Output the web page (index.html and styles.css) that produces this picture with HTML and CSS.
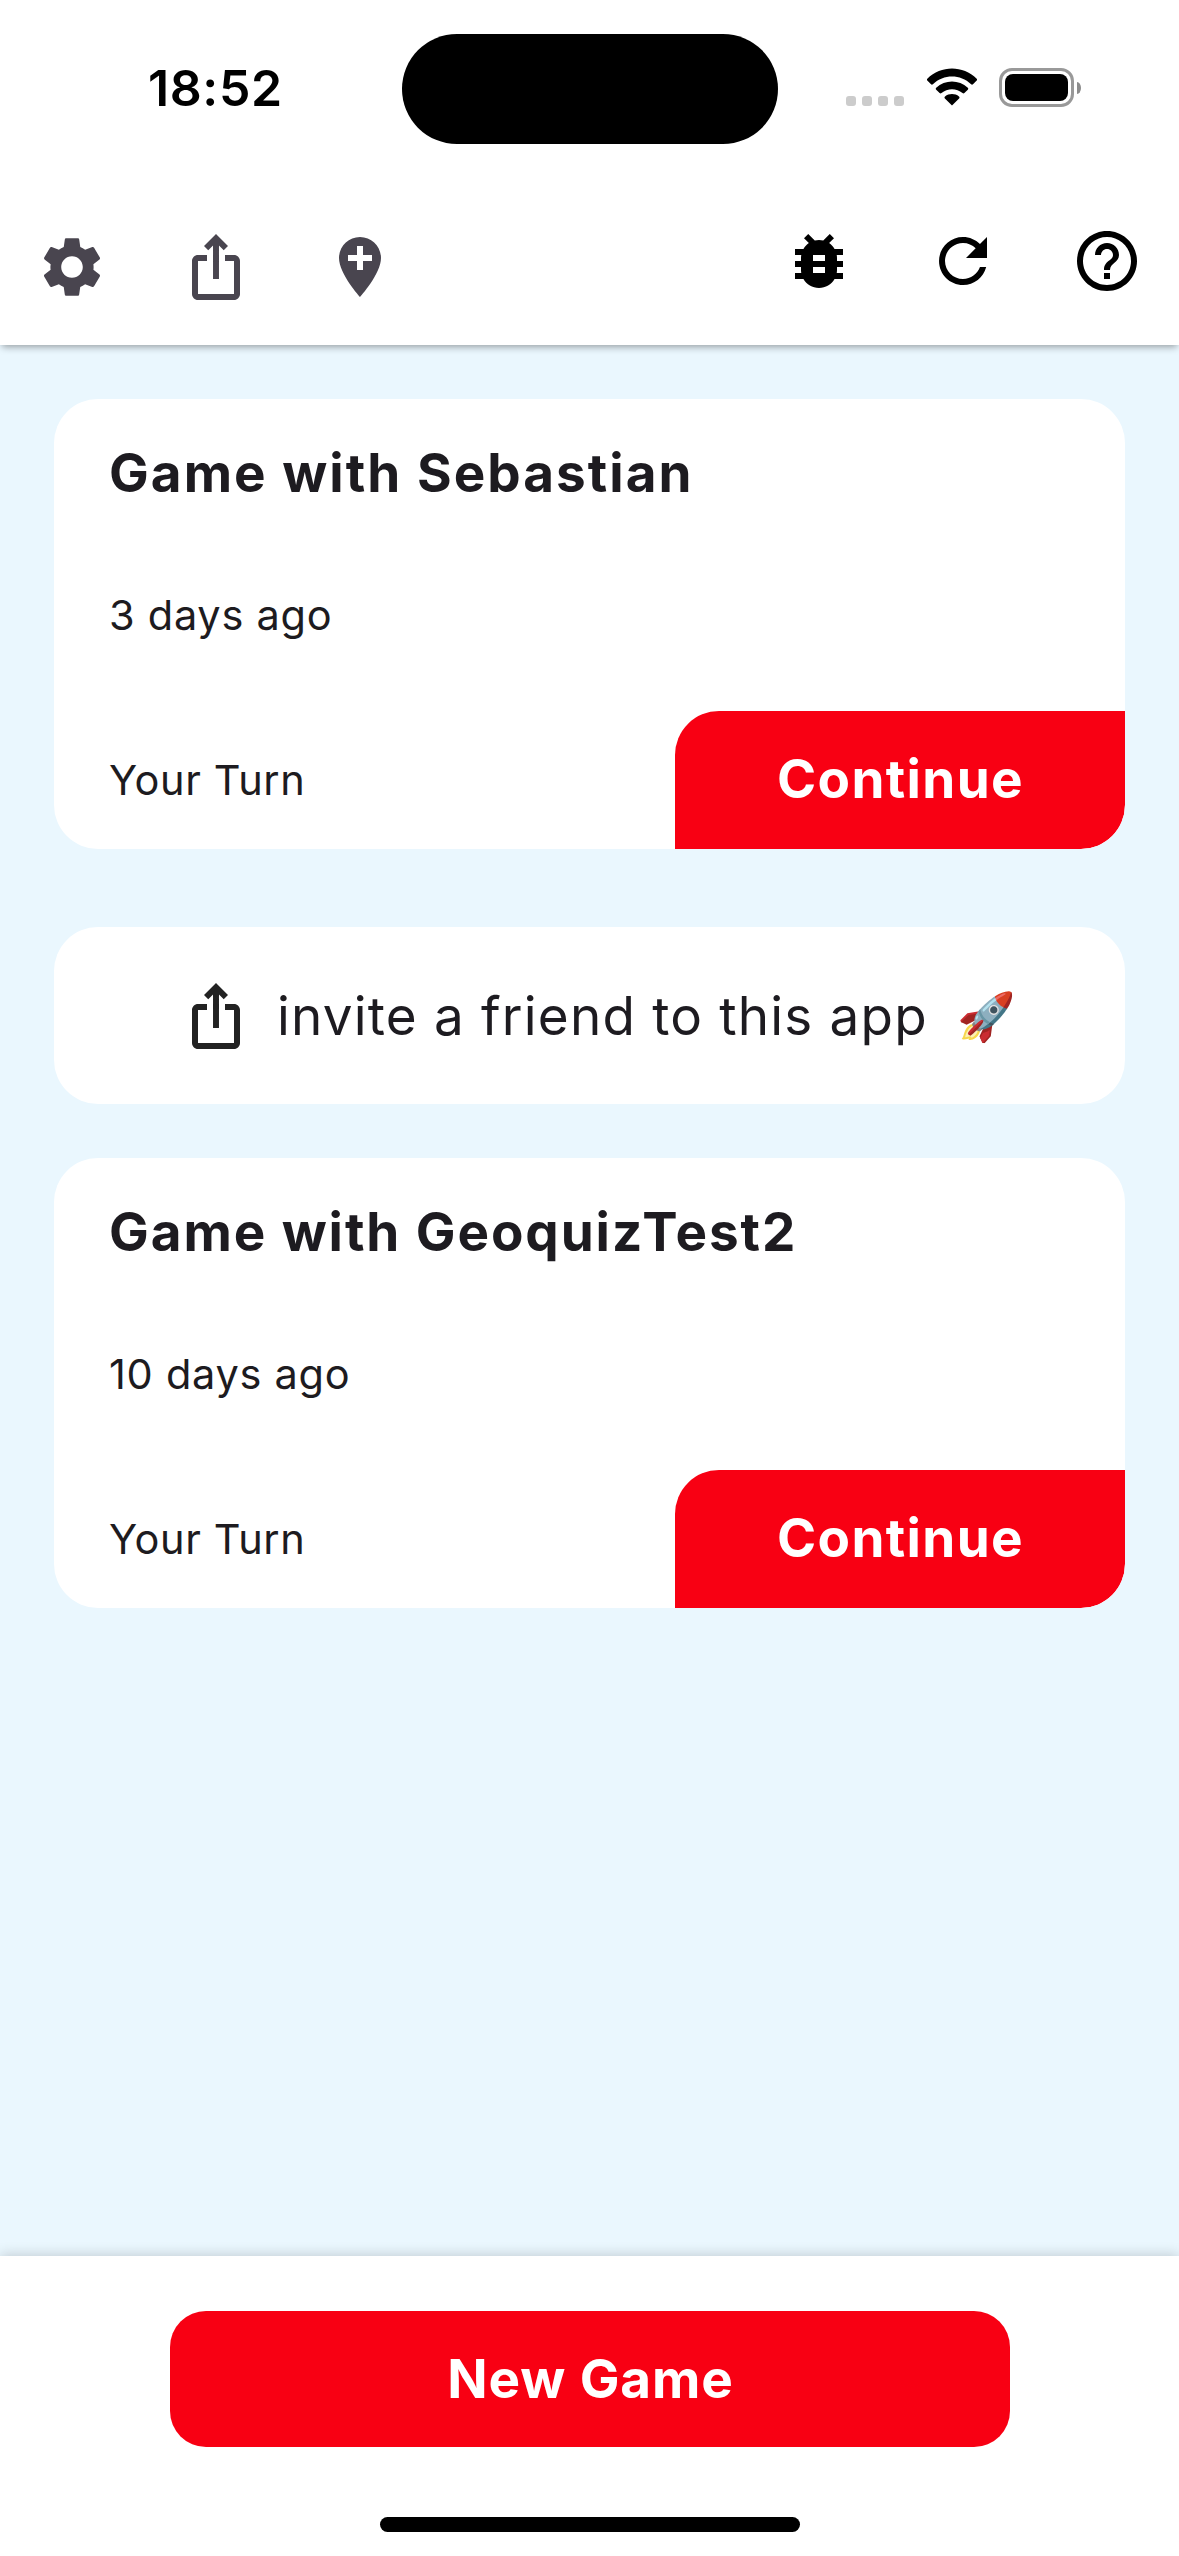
FILE: index.html
```html
<!DOCTYPE html>
<html lang="en">
<head>
<meta charset="utf-8">
<title>Games</title>
<link rel="stylesheet" href="styles.css">
</head>
<body>
<svg class="defs" aria-hidden="true">
  <symbol id="share" viewBox="0 0 24 24"><path d="M16 5l-1.42 1.42-1.59-1.59V16h-1.98V4.83L9.42 6.42 8 5l4-4 4 4zm4 5v11c0 1.1-.9 2-2 2H6c-1.11 0-2-.9-2-2V10c0-1.11.89-2 2-2h3v2H6v11h12V10h-3V8h3c1.1 0 2 .89 2 2z"/></symbol>
</svg>
<div class="screen">
  <header class="header">
    <div class="status">
      <time class="clock">18:52</time>
      <div class="island"></div>
      <div class="indicators">
        <div class="dots"><i class="dot"></i><i class="dot"></i><i class="dot"></i><i class="dot"></i></div>
        <svg class="wifi" viewBox="0 0 52 38">
          <path d="M26 37.5 18.9 30.4C18.3 29.8 18.4 29 19 28.5 23 25.3 29 25.3 33 28.5 33.6 29 33.7 29.8 33.1 30.4Z"/>
          <path d="M10.2 21.7C9.6 21.1 9.6 20.3 10.2 19.7 19 11.5 33 11.5 41.8 19.7 42.4 20.3 42.4 21.1 41.8 21.7L38.4 25.1C37.8 25.7 37.1 25.7 36.5 25.1 30.6 19.8 21.4 19.8 15.5 25.1 14.9 25.7 14.2 25.7 13.6 25.1Z"/>
          <path d="M1.3 12.6C.8 12.1.8 11.3 1.3 10.8 15-2.9 37-2.9 50.7 10.8 51.2 11.3 51.2 12.1 50.7 12.6L47 16.3C46.4 16.9 45.7 16.9 45.1 16.3 34.4 6 17.6 6 6.9 16.3 6.3 16.9 5.6 16.9 5 16.3Z"/>
        </svg>
        <div class="battery"><div class="cell"><div class="charge"></div></div><div class="nub"></div></div>
      </div>
    </div>
    <nav class="toolbar">
      <div class="tools tools-left">
        <svg class="icon" viewBox="0 0 24 24"><path d="M19.14 12.94c.04-.3.06-.61.06-.94 0-.32-.02-.64-.07-.94l2.03-1.58c.18-.14.23-.41.12-.61l-1.92-3.32c-.12-.22-.37-.29-.59-.22l-2.39.96c-.5-.38-1.03-.7-1.62-.94l-.36-2.54c-.04-.24-.24-.41-.48-.41h-3.84c-.24 0-.43.17-.47.41l-.36 2.54c-.59.24-1.13.57-1.62.94l-2.39-.96c-.22-.08-.47 0-.59.22L2.74 8.87c-.12.21-.08.47.12.61l2.03 1.58c-.05.3-.09.63-.09.94s.02.64.07.94l-2.03 1.58c-.18.14-.23.41-.12.61l1.92 3.32c.12.22.37.29.59.22l2.39-.96c.5.38 1.03.7 1.62.94l.36 2.54c.05.24.24.41.48.41h3.84c.24 0 .44-.17.47-.41l.36-2.54c.59-.24 1.13-.56 1.62-.94l2.39.96c.22.08.47 0 .59-.22l1.92-3.32c.12-.22.07-.47-.12-.61l-2.01-1.58zM12 15.6c-1.98 0-3.6-1.62-3.6-3.6s1.62-3.6 3.6-3.6 3.6 1.62 3.6 3.6-1.62 3.6-3.6 3.6z"/></svg>
        <svg class="icon"><use href="#share"/></svg>
        <svg class="icon" viewBox="0 0 24 24"><path d="M12 2C8.14 2 5 5.14 5 9c0 5.25 7 13 7 13s7-7.75 7-13c0-3.86-3.14-7-7-7zm4 8h-3v3h-2v-3H8V8h3V5h2v3h3v2z"/></svg>
      </div>
      <div class="tools">
        <svg class="icon" viewBox="0 0 24 24"><path d="M20 8h-2.81c-.45-.78-1.07-1.45-1.82-1.96L17 4.41 15.59 3l-2.17 2.17C12.96 5.06 12.49 5 12 5s-.96.06-1.41.17L8.41 3 7 4.41l1.62 1.63C7.88 6.55 7.26 7.22 6.81 8H4v2h2.09c-.05.33-.09.66-.09 1v1H4v2h2v1c0 .34.04.67.09 1H4v2h2.81c1.04 1.79 2.97 3 5.19 3s4.15-1.21 5.19-3H20v-2h-2.09c.05-.33.09-.66.09-1v-1h2v-2h-2v-1c0-.34-.04-.67-.09-1H20V8zm-6 8h-4v-2h4v2zm0-4h-4v-2h4v2z"/></svg>
        <svg class="icon" viewBox="0 0 24 24"><path d="M17.65 6.35C16.2 4.9 14.21 4 12 4c-4.42 0-7.99 3.58-7.99 8s3.57 8 7.99 8c3.73 0 6.84-2.55 7.73-6h-2.08c-.82 2.33-3.04 4-5.65 4-3.31 0-6-2.69-6-6s2.69-6 6-6c1.66 0 3.14.69 4.22 1.78L13 11h7V4l-2.35 2.35z"/></svg>
        <svg class="icon" viewBox="0 0 24 24"><path d="M11 18h2v-2h-2v2zm1-16C6.48 2 2 6.48 2 12s4.48 10 10 10 10-4.48 10-10S17.52 2 12 2zm0 18c-4.41 0-8-3.59-8-8s3.59-8 8-8 8 3.59 8 8-3.59 8-8 8zm0-14c-2.21 0-4 1.79-4 4h2c0-1.1.9-2 2-2s2 .9 2 2c0 2-3 1.75-3 5h2c0-2.25 3-2.5 3-5 0-2.21-1.79-4-4-4z"/></svg>
      </div>
    </nav>
  </header>

  <main class="games">
    <section class="game">
      <h2 class="title">Game with Sebastian</h2>
      <p class="age">3 days ago</p>
      <div class="row"><span class="turn">Your Turn</span><button class="continue">Continue</button></div>
    </section>
    <section class="invite">
      <svg class="icon"><use href="#share"/></svg>
      <span class="invite-text">invite a friend to this app</span>
      <span class="rocket">🚀</span>
    </section>
    <section class="game">
      <h2 class="title title-wide">Game with GeoquizTest2</h2>
      <p class="age">10 days ago</p>
      <div class="row"><span class="turn">Your Turn</span><button class="continue">Continue</button></div>
    </section>
  </main>

  <footer class="footer">
    <button class="new-game">New Game</button>
    <div class="home-bar"></div>
  </footer>
</div>
</body>
</html>
```
FILE: styles.css
```css
* { box-sizing: border-box; }
body { margin: 0; font-family: Inter, "Liberation Sans", sans-serif; color: #1d1b20; }
h2, p { margin: 0; }
button { border: 0; padding: 0; font-family: inherit; color: #fff; background: #f80013; }
.defs { display: none; }

.screen { width: 1179px; height: 2556px; display: flex; flex-direction: column; background: #eaf7fe; overflow: hidden; }

.header { position: relative; height: 345px; background: #fff; box-shadow: 0 4px 7px -2px rgba(0, 0, 0, .36); }
.status { display: grid; grid-template-columns: 402px 376px 401px; height: 177px; padding-top: 34px; }
.clock { padding: 22px 0 0 148px; font-size: 50px; line-height: 64px; font-weight: 600; letter-spacing: .6px; color: #000; }
.island { height: 110px; border-radius: 55px; background: #000; }
.indicators { display: flex; align-items: flex-start; padding: 34px 0 0 68px; }
.dots { display: flex; gap: 6px; padding-top: 28px; }
.dot { width: 10px; height: 10px; border-radius: 3px; background: #ccc; }
.wifi { width: 52px; height: 38px; margin-left: 21.5px; }
.battery { display: flex; align-items: center; gap: 3px; margin-left: 21.5px; }
.cell { width: 75px; height: 39px; padding: 3px; border: 3px solid #999; border-radius: 13px; }
.charge { height: 27px; border-radius: 8px; background: #000; }
.nub { width: 4px; height: 12px; border-radius: 0 4px 4px 0 / 0 6px 6px 0; background: #8c8c8c; }

.toolbar { display: flex; justify-content: space-between; padding: 48px 36px 0; }
.tools { display: flex; gap: 72px; color: #000; }
.tools-left { padding-top: 6px; color: #49454f; }
.icon { display: block; width: 72px; height: 72px; fill: currentColor; }

.games { flex: 1; display: flex; flex-direction: column; padding: 54px 54px 0; }
.game { display: flex; flex-direction: column; height: 450px; padding: 42px 0 0 55px; border-radius: 44px; background: #fff; overflow: hidden; }
.title { font-size: 53px; line-height: 64px; font-weight: 700; letter-spacing: 2.04px; }
.title-wide { letter-spacing: 1.92px; }
.age { margin-top: 85px; font-size: 41.5px; line-height: 50px; letter-spacing: .73px; }
.row { display: flex; align-items: center; justify-content: space-between; margin-top: auto; }
.turn { font-size: 41.5px; line-height: 50px; letter-spacing: .62px; }
.continue { width: 450px; height: 138px; padding: 0 0 2px 1px; border-radius: 44px 0; font-size: 53px; font-weight: 700; letter-spacing: 1.39px; }

.invite { display: flex; align-items: center; height: 177px; margin: 78px 0 54px; padding-left: 126px; border-radius: 44px; background: #fff; }
.invite .icon { color: #222; }
.invite-text { margin-left: 25px; font-size: 53px; line-height: 64px; letter-spacing: 1.19px; white-space: nowrap; }
.rocket { margin-left: 29px; font-size: 47px; line-height: 64px; }

.footer { position: relative; display: flex; flex-direction: column; align-items: center; height: 300px; padding-top: 55px; background: #fff; box-shadow: 0 -2px 12px rgba(0, 0, 0, .16); }
.new-game { width: 840px; height: 136px; padding-left: 2px; border-radius: 36px; font-size: 53px; font-weight: 700; letter-spacing: .88px; }
.home-bar { width: 420px; height: 15px; margin-top: 70px; border-radius: 8px; background: #000; }
```
